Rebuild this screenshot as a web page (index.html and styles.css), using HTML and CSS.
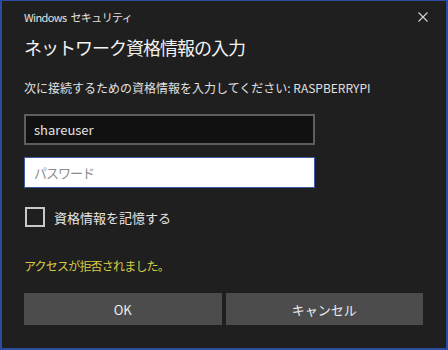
FILE: index.html
```html
<!DOCTYPE html>
<html lang="ja">
<head>
  <meta charset="UTF-8">
  <meta name="viewport" content="width=device-width, initial-scale=1.0">
  <title>Windows セキュリティ</title>
  <link rel="stylesheet" href="styles.css">
</head>
<body>
  <div class="window">
    <div class="titlebar">
      <span class="app-name">Windows セキュリティ</span>
      <button class="close-button" aria-label="閉じる">
        <svg width="10" height="10" viewBox="0 0 10 10">
          <path d="M0.5 0.5 L9.5 9.5 M9.5 0.5 L0.5 9.5" stroke="#d6d6d6" stroke-width="1.1" fill="none"/>
        </svg>
      </button>
    </div>

    <div class="content">
      <h1>ネットワーク資格情報の入力</h1>
      <p class="description">次に接続するための資格情報を入力してください: RASPBERRYPI</p>

      <input class="field field-user" type="text" value="shareuser">
      <input class="field field-password" type="password" placeholder="パスワード">

      <label class="remember">
        <span class="checkbox"></span>
        <span>資格情報を記憶する</span>
      </label>

      <p class="error">アクセスが拒否されました。</p>

      <div class="buttons">
        <button class="button">OK</button>
        <button class="button">キャンセル</button>
      </div>
    </div>
  </div>
</body>
</html>
```

FILE: styles.css
```css
body, html {
  margin: 0;
  padding: 0;
  width: 448px;
  height: 350px;
  overflow: hidden;
  background-color: #1f1f1f;
  font-family: "Noto Sans CJK JP", "Noto Sans", sans-serif;
}

/* Ventana */
.window {
  box-sizing: border-box;
  width: 448px;
  height: 350px;
  background-color: #1f1f1f;
  border: 2px solid #2e4c9e;
  border-top-width: 1px;
  color: #e6e6e6;
}

.titlebar {
  display: flex;
  align-items: center;
  height: 31px;
  padding-left: 22px;
}

.app-name {
  flex: 1;
  font-size: 11px;
  letter-spacing: -0.6px;
  word-spacing: 2px;
  color: #e2e2e2;
}

.close-button {
  width: 46px;
  height: 31px;
  display: flex;
  align-items: center;
  justify-content: center;
  background: none;
  border: none;
  padding: 0;
}

.content {
  padding: 0 23px 0 22px;
}

h1 {
  margin: 3px 0 0;
  font-size: 18px;
  line-height: 24px;
  font-weight: 400;
  letter-spacing: -1px;
  color: #f2f2f2;
}

.description {
  margin: 20px 0 0;
  font-size: 12px;
  line-height: 18px;
  color: #e0e0e0;
  white-space: nowrap;
}

.field {
  display: block;
  box-sizing: border-box;
  width: 291px;
  height: 31px;
  margin: 0;
  padding: 0 8px;
  font-family: inherit;
  font-size: 13px;
  outline: none;
}

.field-user {
  margin-top: 17px;
  background-color: #111111;
  border: 2px solid #5e5e5e;
  color: #e4e4e4;
}

.field-password {
  margin-top: 12px;
  background-color: #ffffff;
  border: 1px solid #3d5aa3;
  padding-left: 9px;
}

.field-password::placeholder {
  color: #8c8c8c;
  letter-spacing: -1px;
}

.remember {
  display: flex;
  align-items: center;
  gap: 9px;
  margin-top: 19px;
  margin-left: 1px;
  font-size: 13px;
  color: #e4e4e4;
}

.checkbox {
  box-sizing: border-box;
  width: 20px;
  height: 20px;
  border: 2px solid #c9c9c9;
}

.error {
  margin: 30px 0 0;
  font-size: 12px;
  line-height: 18px;
  letter-spacing: -0.8px;
  color: #d6cd45;
}

.buttons {
  display: grid;
  grid-template-columns: 1fr 1fr;
  gap: 4px;
  margin-top: 18px;
}

.button {
  height: 32px;
  background-color: #4c4c4c;
  border: none;
  color: #ececec;
  font-family: inherit;
  font-size: 13px;
}
```
